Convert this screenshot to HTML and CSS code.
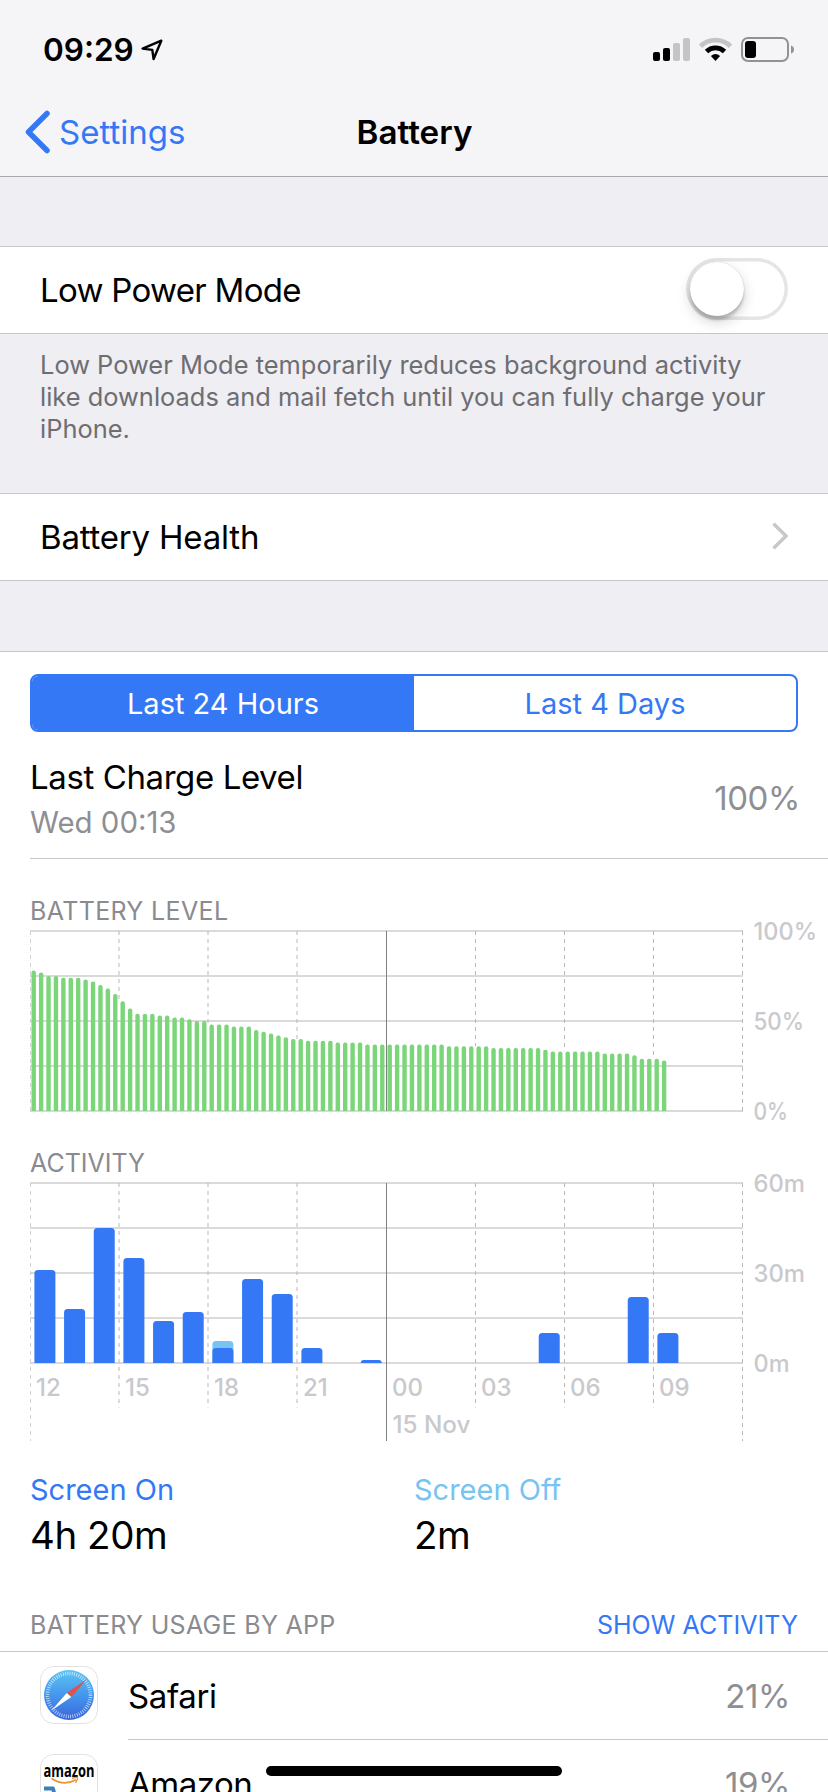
FILE: index.html
```html
<!DOCTYPE html>
<html lang="en">
<head>
<meta charset="utf-8">
<title>Battery</title>
<link rel="stylesheet" href="styles.css">
</head>
<body>
<div class="screen">
  <header class="top">
    <div class="status">
      <span class="clock">09:29</span>
      <svg class="location" width="24" height="24" viewBox="0 0 24 24"><path d="M21.3 2.7 L2.6 10.6 L12.3 11.9 L13.6 21 Z" fill="none" stroke="#000" stroke-width="2.4" stroke-linejoin="round"/></svg>
      <svg class="indicators" width="144" height="28" viewBox="0 0 144 28">
        <rect x="2" y="16" width="7" height="9" rx="2"/>
        <rect x="12" y="12" width="7" height="13" rx="2"/>
        <rect x="22" y="7" width="7" height="18" rx="2" fill="#c4c4c6"/>
        <rect x="32" y="2" width="7" height="23" rx="2" fill="#c4c4c6"/>
        <path d="M49.5 10.2 A21.5 21.5 0 0 1 79.5 10.2" fill="none" stroke="#c4c4c6" stroke-width="4.8"/>
        <path d="M55.5 15.4 A13 13 0 0 1 73.5 15.4" fill="none" stroke="#000" stroke-width="4.8"/>
        <path d="M59.9 20 Q64.5 16 69.1 20 L64.5 25 Z"/>
        <rect x="91" y="2" width="46" height="23" rx="6" fill="none" stroke="#929295" stroke-width="2"/>
        <rect x="94" y="5" width="11" height="17" rx="3"/>
        <path d="M140 9.500 Q143 10.500 143 13.500 Q143 16.500 140 17.500 Z" fill="#929295"/>
      </svg>
    </div>
    <nav class="nav">
      <div class="back">
        <svg width="28" height="46" viewBox="0 0 28 46"><path d="M23 4.500 L4.500 23 L23 41.500" fill="none" stroke="#3478f6" stroke-width="5.500" stroke-linecap="round" stroke-linejoin="round"/></svg>
        <span class="back-label">Settings</span>
      </div>
      <h1 class="title">Battery</h1>
    </nav>
  </header>

  <section class="row row-power">
    <span class="label-power">Low Power Mode</span>
    <span class="switch"><span class="knob"></span></span>
  </section>
  <p class="note">Low Power Mode temporarily reduces background activity<br>like downloads and mail fetch until you can fully charge your<br>iPhone.</p>
  <section class="row row-health">
    <span class="label-health">Battery Health</span>
    <svg class="chevron" width="18" height="30" viewBox="0 0 18 30"><path d="M3.500 2.700 L16 15 L3.500 27.300" fill="none" stroke="#c7c7cc" stroke-width="3.400"/></svg>
  </section>

  <main class="usage">
    <div class="segments">
      <span class="segment segment-on">Last 24 Hours</span>
      <span class="segment">Last 4 Days</span>
    </div>
    <div class="charge">
      <div class="charge-text">
        <span class="charge-title">Last Charge Level</span>
        <span class="charge-time">Wed 00:13</span>
      </div>
      <span class="charge-value">100%</span>
    </div>

    <h2 class="caption caption-level">BATTERY LEVEL</h2>
    <svg class="chart" id="level" width="798" height="200" viewBox="0 0 798 200"></svg>
    <h2 class="caption caption-activity">ACTIVITY</h2>
    <svg class="chart" id="activity" width="798" height="276" viewBox="0 0 798 276"></svg>

    <div class="totals">
      <div class="total"><span class="total-name on">Screen On</span><span class="total-time">4h 20m</span></div>
      <div class="total"><span class="total-name off">Screen Off</span><span class="total-time">2m</span></div>
    </div>

    <div class="apps-head">
      <h2 class="caption caption-apps">BATTERY USAGE BY APP</h2>
      <span class="show">SHOW ACTIVITY</span>
    </div>
    <div class="app">
      <svg class="app-icon" width="58" height="58" viewBox="0 0 58 58">
        <defs><linearGradient id="sky" x1="0" y1="0" x2="0" y2="1"><stop offset="0" stop-color="#5cc4f2"/><stop offset=".5" stop-color="#4597ec"/><stop offset="1" stop-color="#3866dd"/></linearGradient></defs>
        <rect x=".5" y=".5" width="57" height="57" rx="13" fill="#fff" stroke="#e2e2e4"/>
        <circle cx="29" cy="29" r="25" fill="url(#sky)"/>
        <circle cx="29" cy="29" r="21.500" fill="none" stroke="#fff" stroke-opacity=".72" stroke-width="3.600" stroke-dasharray=".8 1.451"/>
        <path d="M46.500 13.500 L26.700 27 L31.300 31 Z" fill="#e0524b"/>
        <path d="M11.500 44.500 L26.700 27 L31.300 31 Z" fill="#fff"/>
      </svg>
      <div class="app-body">
        <span class="app-name name-safari">Safari</span>
        <span class="app-share">21%</span>
      </div>
    </div>
    <div class="app">
      <svg class="app-icon" width="58" height="58" viewBox="0 0 58 58">
        <rect x=".5" y=".5" width="57" height="57" rx="13" fill="#fff" stroke="#e2e2e4"/>
        <text class="brand" x="3.500" y="22.500" textLength="51" lengthAdjust="spacingAndGlyphs">amazon</text>
        <path d="M11.500 24.500 Q24 32.500 36 25.800" fill="none" stroke="#e8953a" stroke-width="1.800"/>
        <path d="M32 24.500 Q37 22.800 37.500 24 Q37.800 25.500 35.500 28.800" fill="none" stroke="#e8953a" stroke-width="1.400"/>
        <path d="M4 34.500 H13 L17 50" fill="none" stroke="#3c7fb8" stroke-width="3.800" stroke-linejoin="round"/>
      </svg>
      <div class="app-body">
        <span class="app-name name-amazon">Amazon</span>
        <span class="app-share">19%</span>
      </div>
    </div>
  </main>
  <div class="home"></div>
</div>
<script src="charts.js"></script>
</body>
</html>
```
FILE: charts.js
```js
const NS = 'http://www.w3.org/2000/svg';
const PLOT = 712, TOP = 11, HEIGHT = 180, BASE = TOP + HEIGHT;

function add(svg, name, attrs, text) {
  const el = document.createElementNS(NS, name);
  for (const key in attrs) el.setAttribute(key, attrs[key]);
  if (text) el.textContent = text;
  svg.appendChild(el);
}

function grid(svg, labels) {
  for (let i = 0; i < 5; i++) {
    add(svg, 'rect', { class: 'grid-line', x: 0, y: TOP + i * 45 - 1, width: 713, height: 2 });
  }
  labels.forEach((label, i) => {
    add(svg, 'text', { class: 'axis', x: 723.5, y: TOP + i * 90 + 8.7, textLength: label[1], lengthAdjust: 'spacingAndGlyphs' }, label[0]);
  });
}

// Dashed lines every three hours; endOf gives the lower end of line i.
function hours(svg, endOf) {
  for (let i = 0; i < 9; i++) {
    if (i === 4) continue;
    const x = i * 89 + (i > 0 && i < 4 ? 0 : 0.5);
    add(svg, 'line', { class: i === 0 ? 'hour first' : 'hour', x1: x, x2: x, y1: TOP, y2: endOf(i) });
  }
}

function midnight(svg, end) {
  add(svg, 'line', { class: 'midnight', x1: 356.5, x2: 356.5, y1: TOP, y2: end });
}

// Bar with rounded top corners, standing on the chart's base line.
function bar(svg, cls, x, width, height, r) {
  r = Math.min(r, height);
  add(svg, 'path', { class: cls, d: `M${x} ${BASE}v${r - height}q0 ${-r} ${r} ${-r}h${width - 2 * r}q${r} 0 ${r} ${r}v${height - r}z` });
}

// Charge percentage per quarter hour.
const charge = [78, 77, 75, 75, 74, 74, 74, 73, 72, 70, 68, 65, 61, 57, 54, 54, 54, 53, 53, 52, 52, 51, 50, 50,
  48, 48, 48, 47, 47, 47, 45, 44, 43, 42, 41, 40, 40, 39, 39, 39, 39, 38, 38, 38, 38,
  37, 37, 37, 37, 37, 37, 37, 37, 37, 37, 37, 36, 36, 36, 36, 36, 36, 35, 35, 35, 35, 35, 35, 35,
  34, 33, 33, 33, 33, 33, 33, 33, 32, 32, 32, 32, 31, 29, 29, 29, 28];
const level = document.getElementById('level');
grid(level, [['100%', 63.5], ['50%', 50.5], ['0%', 34.5]]);
hours(level, i => i % 8 ? BASE - charge[i * 12] * 1.8 : BASE);
charge.forEach((v, i) => bar(level, 'charge-bar', 1.5 + i * PLOT / 96, 4.4, v * 1.8, 2));
midnight(level, BASE);

// Minutes of use per hour.
const minutes = { 0: 31, 1: 18, 2: 45, 3: 35, 4: 14, 5: 17, 6: 5, 7: 28, 8: 23, 9: 5, 11: 1, 17: 10, 20: 22, 21: 10 };
const activity = document.getElementById('activity');
grid(activity, [['60m', 51.5], ['30m', 51.5], ['0m', 36]]);
hours(activity, i => i % 8 ? 235.5 : 269);
bar(activity, 'off-bar', 4.4 + 6 * PLOT / 24, 21, 22, 3.5);
for (const h in minutes) bar(activity, 'on-bar', 4.4 + h * PLOT / 24, 21, minutes[h] * 3, 3.5);
midnight(activity, 269);
['12', '15', '18', '21', '00', '03', '06', '09'].forEach((label, i) => {
  add(activity, 'text', { class: 'axis', x: i * 89 + 6, y: 224 }, label);
});
add(activity, 'text', { class: 'axis', x: 362.5, y: 261, textLength: 78, lengthAdjust: 'spacingAndGlyphs' }, '15 Nov');
```
FILE: styles.css
```css
* { box-sizing: border-box; }
body { margin: 0; font-family: Inter, "Liberation Sans", sans-serif; background: #efeef3; color: #000; }
h1, h2, p { margin: 0; font-weight: 400; }
svg { display: block; flex: none; }
span { white-space: nowrap; }
.screen { position: relative; width: 828px; height: 1792px; overflow: hidden; font-size: 33px; }

.top { height: 177px; background: #f5f5f8; border-bottom: 1px solid #a9a9ad; }
.status { display: flex; height: 88px; padding: 36px 33px 0 43px; }
.clock { width: 97px; font-size: 31.500px; line-height: 28px; font-weight: 600; }
.location { margin-top: 2px; }
.indicators { margin-left: auto; }
.nav { display: grid; grid-template-columns: 1fr auto 1fr; align-items: center; height: 88px; padding: 0 23px 0 24px; }
.back { display: flex; align-items: center; gap: 7px; color: #3478f6; }
.title { font-size: 33.200px; line-height: 40px; font-weight: 600; }

.row { display: flex; align-items: center; justify-content: space-between; height: 88px; padding: 0 40px; background: #fff; border: solid #c8c7cc; border-width: 1px 0; }
.row-power { margin-top: 69px; }
.row-health { margin-top: 47px; }
.label-power { letter-spacing: -.7px; }
.label-health { letter-spacing: -.2px; }
.chevron { margin-bottom: 2px; }
.switch { width: 102px; height: 62px; margin-bottom: 2px; padding: 4px; border-radius: 31px; box-shadow: inset 0 0 0 3.500px #e5e5e5; }
.knob { display: block; width: 54px; height: 54px; border-radius: 50%; background: #fff; box-shadow: 0 6px 14px rgba(0,0,0,.17), 0 4px 3px rgba(0,0,0,.18), 0 0 1px rgba(0,0,0,.25); }
.note { height: 112px; padding: 15px 0 0 40px; font-size: 25.400px; line-height: 32px; letter-spacing: .02px; color: #6d6d72; white-space: nowrap; }

.usage { margin-top: 70px; height: 1142px; padding-top: 22px; background: #fff; border-top: 1px solid #c8c7cc; }
.segments { display: flex; width: 768px; height: 58px; margin-left: 30px; border: 2px solid #3478f6; border-radius: 8px; overflow: hidden; }
.segment { flex: 1; font-size: 29px; line-height: 56px; text-align: center; color: #3478f6; }
.segment-on { background: #3478f6; color: #fff; }
.charge { display: flex; justify-content: space-between; height: 127px; margin-left: 30px; padding: 25px 28px 0 0; border-bottom: 1px solid #c8c7cc; }
.charge-text { display: flex; flex-direction: column; }
.charge-title { line-height: 40px; letter-spacing: -.4px; }
.charge-time { padding-top: 6px; font-size: 29.400px; line-height: 40px; color: #8e8e93; }
.charge-value { padding-top: 21px; line-height: 40px; letter-spacing: -.4px; color: #8e8e93; }

.caption { font-size: 25px; line-height: 30px; color: #8a8a8f; }
.caption-level { margin: 37px 0 0 30px; height: 24px; letter-spacing: .35px; }
.chart { margin-left: 30px; overflow: visible; }
.caption-activity { margin: 28px 0 0 30px; height: 24px; }
.grid-line { fill: #dadada; }
.hour { stroke: #b9b9b9; stroke-width: 1; stroke-dasharray: 4 4; }
.first { stroke: #d2d2d2; }
.midnight { stroke: #808080; stroke-width: 1; }
.charge-bar { fill: #7bd579; }
.on-bar { fill: #3478f6; }
.off-bar { fill: #77c3f2; }
.axis { font: 500 24px Inter, "Liberation Sans", sans-serif; fill: #c9c9cd; }

.totals { display: grid; grid-template-columns: 384px 384px; margin: 23px 0 0 30px; height: 119px; }
.total { display: flex; flex-direction: column; }
.total-name { font-size: 29px; line-height: 37px; }
.on { color: #3478f6; }
.off { color: #77c3f2; }
.total-time { padding-top: 3px; font-size: 38.500px; line-height: 48px; letter-spacing: -.45px; }

.apps-head { display: flex; justify-content: space-between; height: 62px; padding: 20px 30px 0; border-bottom: 1px solid #c8c7cc; }
.caption-apps { letter-spacing: .3px; }
.show { font-size: 25px; line-height: 30px; letter-spacing: .05px; color: #3478f6; }
.app { display: flex; height: 88px; padding-left: 40px; }
.app-icon { margin-top: 14px; }
.app-body { flex: 1; display: flex; justify-content: space-between; align-items: center; margin-left: 30px; padding-right: 38px; border-bottom: 1px solid #c8c7cc; }
.name-safari { letter-spacing: -.35px; }
.name-amazon { letter-spacing: -.5px; }
.app-share { letter-spacing: -.4px; color: #8e8e93; }
.brand { font: 700 17.500px "Open Sans", sans-serif; }
.home { position: absolute; left: 266px; top: 1766px; width: 296px; height: 10px; border-radius: 5px; background: #000; }
```
